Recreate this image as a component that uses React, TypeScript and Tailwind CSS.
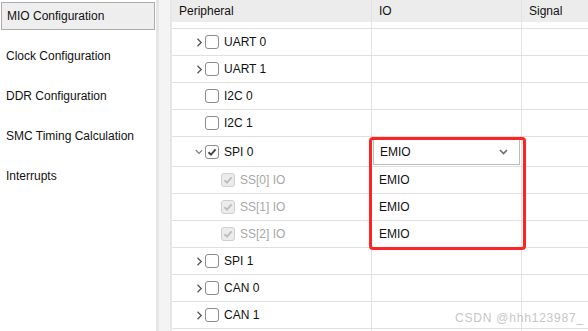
import { ReactNode } from 'react'

type Row = {
  name: string
  expand?: 'right' | 'down'
  checked?: boolean
  child?: boolean
  io?: string
  select?: boolean
}

const rows: Row[] = [
  { name: 'UART 0', expand: 'right' },
  { name: 'UART 1', expand: 'right' },
  { name: 'I2C 0' },
  { name: 'I2C 1' },
  { name: 'SPI 0', expand: 'down', checked: true, io: 'EMIO', select: true },
  { name: 'SS[0] IO', child: true, checked: true, io: 'EMIO' },
  { name: 'SS[1] IO', child: true, checked: true, io: 'EMIO' },
  { name: 'SS[2] IO', child: true, checked: true, io: 'EMIO' },
  { name: 'SPI 1', expand: 'right' },
  { name: 'CAN 0', expand: 'right' },
  { name: 'CAN 1', expand: 'right' },
]

const menu = ['MIO Configuration', 'Clock Configuration', 'DDR Configuration', 'SMC Timing Calculation', 'Interrupts']

function Chevron({ dir }: { dir: 'right' | 'down' }) {
  if (dir === 'right') {
    return (
      <svg width="7" height="9" viewBox="0 0 7 9" className="shrink-0">
        <path d="M1.5 0.8 L5.2 4.5 L1.5 8.2" fill="none" stroke="#555" strokeWidth="1.3" />
      </svg>
    )
  }
  return (
    <svg width="8" height="6" viewBox="0 0 8 6" className="shrink-0">
      <path d="M0.8 1.2 L4 4.4 L7.2 1.2" fill="none" stroke="#777" strokeWidth="1.1" />
    </svg>
  )
}

function Checkbox({ checked, disabled }: { checked?: boolean; disabled?: boolean }) {
  return (
    <span
      className={`w-[14px] h-[14px] rounded-[3px] border-[1.5px] flex items-center justify-center shrink-0 ${
        disabled ? 'border-[#cfcfcf] bg-[#ececec]' : 'border-[#8c8c8c] bg-white'
      }`}
    >
      {checked && (
        <svg width="10" height="10" viewBox="0 0 10 10">
          <path
            d="M1.5 5.2 L4 7.6 L8.6 2.4"
            fill="none"
            stroke={disabled ? '#bdbdbd' : '#444'}
            strokeWidth="1.9"
          />
        </svg>
      )}
    </span>
  )
}

function Cell({ w, children, className = '' }: { w: string; children?: ReactNode; className?: string }) {
  return <div className={`${w} h-full border-r border-[#e3e3e3] flex items-center ${className}`}>{children}</div>
}

export default function App() {
  return (
    <div
      className="relative w-[588px] h-[331px] overflow-hidden bg-white flex text-[12px] text-[#111]"
      style={{ fontFamily: '"Liberation Sans", Arial, sans-serif' }}
    >
      {/* Sidebar */}
      <div className="w-[156px] shrink-0 flex flex-col gap-[12px] pt-[2px] pl-[1px]">
        {menu.map((m, i) => (
          <div
            key={m}
            className={`h-[28px] flex items-center pl-[5px] ${
              i === 0 ? 'bg-[#eeeeee] border border-[#adadad] w-[154px]' : ''
            }`}
          >
            {m}
          </div>
        ))}
      </div>

      {/* Splitter */}
      <div className="w-[3px] shrink-0 bg-[#e6e6e6]" />
      <div className="w-[11px] shrink-0 bg-[#f4f4f4]" />
      <div className="w-[2px] shrink-0 bg-[#e6e6e6]" />

      {/* Table */}
      <div className="flex-1 flex flex-col">
        <div className="h-[22px] flex bg-[#ececec]">
          <Cell w="w-[200px]" className="pl-[7px]">Peripheral</Cell>
          <Cell w="w-[150px]" className="pl-[7px]">IO</Cell>
          <div className="flex-1 flex items-center pl-[7px]">Signal</div>
        </div>
        <div className="h-[7px] flex border-b border-[#e0e0e0]">
          <Cell w="w-[200px]" />
          <Cell w="w-[150px]" />
        </div>
        {rows.map(r => (
          <div
            key={r.name}
            className={`${r.select ? 'h-[30px]' : 'h-[27px]'} flex border-b border-[#e0e0e0]`}
          >
            <Cell w="w-[200px]" className={r.child ? 'pl-[49px]' : 'pl-[21px]'}>
              {!r.child && (
                <span className="w-[12px] flex justify-center">{r.expand && <Chevron dir={r.expand} />}</span>
              )}
              <Checkbox checked={r.checked} disabled={r.child} />
              <span className={`ml-[5px] ${r.child ? 'text-[#a8a8a8]' : ''}`}>{r.name}</span>
            </Cell>
            <Cell w="w-[150px]" className={r.select ? 'px-[1px]' : 'pl-[7px]'}>
              {r.select ? (
                <div className="w-full h-[27px] border border-[#bdbdbd] flex items-center justify-between pl-[6px] pr-[11px]">
                  <span>{r.io}</span>
                  <svg width="9" height="6" viewBox="0 0 9 6">
                    <path d="M1 1 L4.5 4.5 L8 1" fill="none" stroke="#6a6a6a" strokeWidth="1.6" />
                  </svg>
                </div>
              ) : (
                r.io
              )}
            </Cell>
            <div className="flex-1" />
          </div>
        ))}
        <div className="flex-1 flex">
          <Cell w="w-[200px]" />
          <Cell w="w-[150px]" />
        </div>
      </div>

      {/* Annotation */}
      <div className="absolute left-[369px] top-[137px] w-[157px] h-[113px] border-[3px] border-[#ff2424] rounded-[4px] pointer-events-none" />

      <div className="absolute right-[4px] bottom-[4px] text-[12px] text-[#c6c6c6] tracking-[0.8px]">
        CSDN @hhh123987_
      </div>
    </div>
  )
}
